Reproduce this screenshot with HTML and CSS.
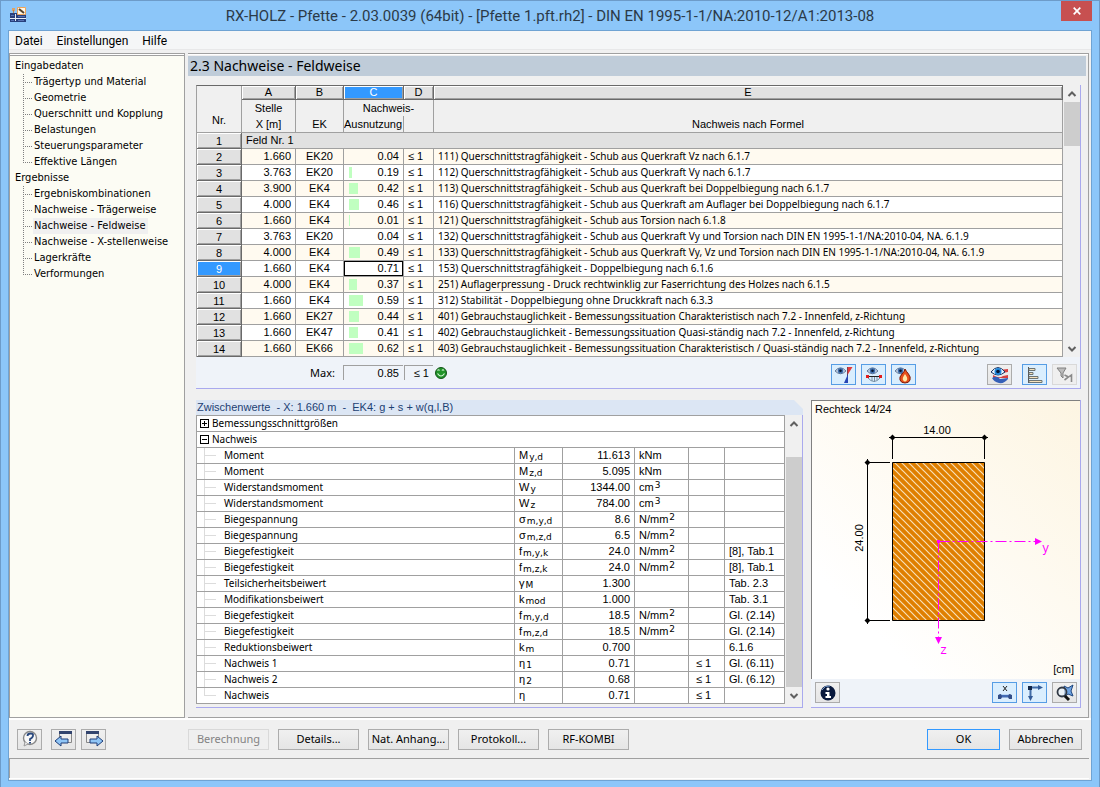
FILE: index.html
```
<!DOCTYPE html>
<html lang="de">
<head>
<meta charset="utf-8">
<title>RX-HOLZ - Pfette</title>
<link rel="stylesheet" href="styles.css">
</head>
<body>
<svg class="defs" width="0" height="0" aria-hidden="true">
  <defs>
    <symbol id="eye" viewBox="0 0 12 8">
      <path d="M0 4Q6-3 12 4Q6 10 0 4Z" fill="#c4d4e8" stroke="#5a7090"/>
      <circle cx="6" cy="3.800" r="3" fill="#3f6fae"/><circle cx="6" cy="3.800" r="1.400" fill="#06142c"/>
    </symbol>
    <symbol id="up" viewBox="0 0 10 8"><path d="M1.500 6L5 2.500L8.500 6" fill="none" stroke="#606060" stroke-width="2"/></symbol>
    <symbol id="down" viewBox="0 0 10 8"><path d="M1.500 2L5 5.500L8.500 2" fill="none" stroke="#606060" stroke-width="2"/></symbol>
  </defs>
</svg>
<div class="window">
  <header class="titlebar">
    <svg class="app-icon" width="16" height="16" viewBox="0 0 16 16" aria-hidden="true">
      <path d="M2 1h3v3H2z" fill="#dca368"/><path d="M3 3h1v3H3z" fill="#b9824e"/>
      <path d="M0 6h16v9H0z" fill="#28407c"/><path d="M0 11h16v1H0zM5 7h1v7H5z" fill="#e8eef8"/>
      <path d="M1 8.500h3M8 9.500h7M1 13.500h3M8 13.500h6" stroke="#5672b4"/><path d="M7.500.500h8v7h-8z" fill="#fff6e4" stroke="#efa65c"/>
      <path d="M9 2l5 4" stroke="#55432c" stroke-width="2"/>
    </svg>
    <h1>RX-HOLZ - Pfette - 2.03.0039 (64bit) - [Pfette 1.pft.rh2] - DIN EN 1995-1-1/NA:2010-12/A1:2013-08</h1>
    <button class="close" aria-label="Schließen"><svg width="8" height="8" viewBox="0 0 8 8"><path d="M.7.7l6.600 6.600M7.300.7L.7 7.300" stroke="#fff" stroke-width="1.700"/></svg></button>
  </header>
  <div class="client">
    <nav class="menu"><button>Datei</button><button>Einstellungen</button><button>Hilfe</button></nav>
    <div class="work">
      <aside class="tree">
        <ul>
          <li><a href="#">Eingabedaten</a>
            <ul class="branch">
              <li><a href="#">Trägertyp und Material</a></li>
              <li><a href="#">Geometrie</a></li>
              <li><a href="#">Querschnitt und Kopplung</a></li>
              <li><a href="#">Belastungen</a></li>
              <li><a href="#">Steuerungsparameter</a></li>
              <li><a href="#">Effektive Längen</a></li>
            </ul>
          </li>
          <li><a href="#">Ergebnisse</a>
            <ul class="branch">
              <li><a href="#">Ergebniskombinationen</a></li>
              <li><a href="#">Nachweise - Trägerweise</a></li>
              <li><a href="#" class="current">Nachweise - Feldweise</a></li>
              <li><a href="#">Nachweise - X-stellenweise</a></li>
              <li><a href="#">Lagerkräfte</a></li>
              <li><a href="#">Verformungen</a></li>
            </ul>
          </li>
        </ul>
      </aside>
      <main class="page">
        <h2>2.3 Nachweise - Feldweise</h2>
        <section class="results">
          <div class="scroller">
            <table class="grid">
              <colgroup><col class="c-nr"><col class="c-a"><col class="c-b"><col class="c-c"><col class="c-d"><col></colgroup>
              <thead>
                <tr class="letters"><th rowspan="3" class="nr">Nr.</th><th>A</th><th>B</th><th class="on">C</th><th>D</th><th>E</th></tr>
                <tr class="h1"><th>Stelle</th><th></th><th colspan="2">Nachweis-</th><th></th></tr>
                <tr class="h2"><th>X [m]</th><th>EK</th><th class="use">Ausnutzung</th><th></th><th>Nachweis nach Formel</th></tr>
              </thead>
              <tbody>
                <tr class="group"><th>1</th><td colspan="5">Feld Nr. 1</td></tr>
                <tr><th>2</th><td>1.660</td><td>EK20</td><td><div class="bar"><span>0.04</span></div></td><td>≤ 1</td><td>111) Querschnittstragfähigkeit - Schub aus Querkraft Vz nach 6.1.7</td></tr>
                <tr><th>3</th><td>3.763</td><td>EK20</td><td><div class="bar"><i style="width:3px"></i><span>0.19</span></div></td><td>≤ 1</td><td>112) Querschnittstragfähigkeit - Schub aus Querkraft Vy nach 6.1.7</td></tr>
                <tr><th>4</th><td>3.900</td><td>EK4</td><td><div class="bar"><i style="width:9px"></i><span>0.42</span></div></td><td>≤ 1</td><td>113) Querschnittstragfähigkeit - Schub aus Querkraft bei Doppelbiegung nach 6.1.7</td></tr>
                <tr><th>5</th><td>4.000</td><td>EK4</td><td><div class="bar"><i style="width:10px"></i><span>0.46</span></div></td><td>≤ 1</td><td>116) Querschnittstragfähigkeit - Schub aus Querkraft am Auflager bei Doppelbiegung nach 6.1.7</td></tr>
                <tr><th>6</th><td>1.660</td><td>EK4</td><td><div class="bar"><i style="width:1px"></i><span>0.01</span></div></td><td>≤ 1</td><td>121) Querschnittstragfähigkeit - Schub aus Torsion nach 6.1.8</td></tr>
                <tr><th>7</th><td>3.763</td><td>EK20</td><td><div class="bar"><span>0.04</span></div></td><td>≤ 1</td><td>132) Querschnittstragfähigkeit - Schub aus Querkraft Vy und Torsion nach DIN EN 1995-1-1/NA:2010-04, NA. 6.1.9</td></tr>
                <tr><th>8</th><td>4.000</td><td>EK4</td><td><div class="bar"><i style="width:11px"></i><span>0.49</span></div></td><td>≤ 1</td><td>133) Querschnittstragfähigkeit - Schub aus Querkraft Vy, Vz und Torsion nach DIN EN 1995-1-1/NA:2010-04, NA. 6.1.9</td></tr>
                <tr><th class="on">9</th><td>1.660</td><td>EK4</td><td class="focus"><div class="bar"><span>0.71</span></div></td><td>≤ 1</td><td>153) Querschnittstragfähigkeit - Doppelbiegung nach 6.1.6</td></tr>
                <tr><th>10</th><td>4.000</td><td>EK4</td><td><div class="bar"><i style="width:8px"></i><span>0.37</span></div></td><td>≤ 1</td><td>251) Auflagerpressung - Druck rechtwinklig zur Faserrichtung des Holzes nach 6.1.5</td></tr>
                <tr><th>11</th><td>1.660</td><td>EK4</td><td><div class="bar"><i style="width:14px"></i><span>0.59</span></div></td><td>≤ 1</td><td>312) Stabilität - Doppelbiegung ohne Druckkraft nach 6.3.3</td></tr>
                <tr><th>12</th><td>1.660</td><td>EK27</td><td><div class="bar"><i style="width:10px"></i><span>0.44</span></div></td><td>≤ 1</td><td>401) Gebrauchstauglichkeit - Bemessungssituation Charakteristisch nach 7.2 - Innenfeld, z-Richtung</td></tr>
                <tr><th>13</th><td>1.660</td><td>EK47</td><td><div class="bar"><i style="width:9px"></i><span>0.41</span></div></td><td>≤ 1</td><td>402) Gebrauchstauglichkeit - Bemessungssituation Quasi-ständig nach 7.2 - Innenfeld, z-Richtung</td></tr>
                <tr><th>14</th><td>1.660</td><td>EK66</td><td><div class="bar"><i style="width:14px"></i><span>0.62</span></div></td><td>≤ 1</td><td>403) Gebrauchstauglichkeit - Bemessungssituation Charakteristisch / Quasi-ständig nach 7.2 - Innenfeld, z-Richtung</td></tr>
              </tbody>
            </table>
            <div class="scrollbar"><svg><use href="#up"/></svg><div class="track"><div class="thumb thumb-top"></div></div><svg><use href="#down"/></svg></div>
          </div>
          <div class="summary">
            <span class="max-label">Max:</span><output class="max">0.85</output><output class="limit">≤ 1</output>
            <svg class="smiley" width="12" height="12" viewBox="0 0 12 12" aria-hidden="true"><circle cx="6" cy="6" r="5.500" fill="#22942a" stroke="#145519"/><path d="M2.500 3.500q1-1.500 2 0M7 3.500q1-1.500 2 0M2.500 6.500Q6 11.500 9.500 6.500" fill="none" stroke="#d8f6d8" stroke-width="1.200"/></svg>
            <div class="tools">
              <button class="tool on" aria-label="Diagramm"><svg width="20" height="18" viewBox="0 0 20 18"><use href="#eye" x="1" y="1" width="11" height="8"/><path d="M13.500 1v16" stroke="#30384c"/><path d="M13.500 1h5l-5 8z" fill="#e23c3c"/><path d="M14 8v9h-4z" fill="#2846b4"/></svg></button>
              <button class="tool on" aria-label="Verformung"><svg width="20" height="18" viewBox="0 0 20 18"><use href="#eye" x="3" y="1" width="11" height="8"/><path d="M4 10.500h12" stroke="#222"/><path d="M4 12q6 7 12 0M8 11v4M10.500 11v5M13 11v3" fill="none" stroke="#7890a4"/><path d="M2 9h3v3H2zM15 9h3v3h-3z" fill="#e31c1c"/></svg></button>
              <button class="tool on" aria-label="Brandschutz"><svg width="20" height="18" viewBox="0 0 20 18"><use href="#eye" x="1" y="1" width="11" height="8"/><path d="M11 3q1 2 3.500 5t1.500 6q-1 3-5 3t-5-3q-1-3 2-6t3-5z" fill="#e8501c" stroke="#7a1c0c"/><path d="M11 8q3 4 2 6-2 3-4 0-1-2 2-6z" fill="#ffe9a8"/></svg></button>
              <button class="tool wide-gap" aria-label="Farben"><svg width="20" height="18" viewBox="0 0 20 18"><path d="M9 4l9-1v3l-6 1-5-1z" fill="#d64040"/><path d="M3 9q6 4 10 1l5-1v3H3z" fill="#d64040"/><path d="M2 12q5-3 8 1l8-1v1q-4 5-9 4T2 12z" fill="#3560b8"/><path d="M1 6Q8-3 15 6Q8 12 1 6Z" fill="#edf6ff" stroke="#173262"/><circle cx="8" cy="5.500" r="3.500" fill="#2088dc"/><circle cx="8" cy="5.500" r="1.800" fill="#061838"/></svg></button>
              <button class="tool on mid-gap" aria-label="Balken"><svg width="20" height="18" viewBox="0 0 20 18"><path d="M3.500 1v16" stroke="#555"/><path d="M4 2.500h6v2H4zM4 6.500h4v2H4zM4 10.500h9v2H4zM4 14.500h13v2H4z" fill="#f6e2bd" stroke="#6c7474"/></svg></button>
              <button class="tool off" aria-label="Filter" disabled><svg width="20" height="18" viewBox="0 0 20 18"><path d="M2 2h9L8 7v5l-2-2V7z" fill="#bcbcbc" stroke="#808080"/><path d="M9.500 9l4 2-4 3M14.500 10.500l2-1.500v7" fill="none" stroke="#8a8a8a" stroke-width="1.600"/></svg></button>
            </div>
          </div>
        </section>
        <div class="lower">
          <section class="details">
            <h3>Zwischenwerte &nbsp;- X: 1.660 m &nbsp;- &nbsp;EK4: g + s + w(q,l,B)</h3>
            <div class="scroller">
              <table class="values">
                <colgroup><col><col class="v-sym"><col class="v-num"><col class="v-unit"><col class="v-lim"><col class="v-ref"></colgroup>
                <tbody>
                  <tr><td colspan="6" class="parent"><div><button class="fold plus" aria-label="Aufklappen"></button>Bemessungsschnittgrößen</div></td></tr>
                  <tr><td colspan="6" class="parent"><div><button class="fold" aria-label="Zuklappen"></button>Nachweis</div></td></tr>
                  <tr><td>Moment</td><td>M<small>y,d</small></td><td>11.613</td><td>kNm</td><td></td><td></td></tr>
                  <tr><td>Moment</td><td>M<small>z,d</small></td><td>5.095</td><td>kNm</td><td></td><td></td></tr>
                  <tr><td>Widerstandsmoment</td><td>W<small>y</small></td><td>1344.00</td><td>cm<sup>3</sup></td><td></td><td></td></tr>
                  <tr><td>Widerstandsmoment</td><td>W<small>z</small></td><td>784.00</td><td>cm<sup>3</sup></td><td></td><td></td></tr>
                  <tr><td>Biegespannung</td><td>σ<small>m,y,d</small></td><td>8.6</td><td>N/mm<sup>2</sup></td><td></td><td></td></tr>
                  <tr><td>Biegespannung</td><td>σ<small>m,z,d</small></td><td>6.5</td><td>N/mm<sup>2</sup></td><td></td><td></td></tr>
                  <tr><td>Biegefestigkeit</td><td>f<small>m,y,k</small></td><td>24.0</td><td>N/mm<sup>2</sup></td><td></td><td>[8], Tab.1</td></tr>
                  <tr><td>Biegefestigkeit</td><td>f<small>m,z,k</small></td><td>24.0</td><td>N/mm<sup>2</sup></td><td></td><td>[8], Tab.1</td></tr>
                  <tr><td>Teilsicherheitsbeiwert</td><td>γ<small>M</small></td><td>1.300</td><td></td><td></td><td>Tab. 2.3</td></tr>
                  <tr><td>Modifikationsbeiwert</td><td>k<small>mod</small></td><td>1.000</td><td></td><td></td><td>Tab. 3.1</td></tr>
                  <tr><td>Biegefestigkeit</td><td>f<small>m,y,d</small></td><td>18.5</td><td>N/mm<sup>2</sup></td><td></td><td>Gl. (2.14)</td></tr>
                  <tr><td>Biegefestigkeit</td><td>f<small>m,z,d</small></td><td>18.5</td><td>N/mm<sup>2</sup></td><td></td><td>Gl. (2.14)</td></tr>
                  <tr><td>Reduktionsbeiwert</td><td>k<small>m</small></td><td>0.700</td><td></td><td></td><td>6.1.6</td></tr>
                  <tr><td>Nachweis 1</td><td>η<small>1</small></td><td>0.71</td><td></td><td>≤ 1</td><td>Gl. (6.11)</td></tr>
                  <tr><td>Nachweis 2</td><td>η<small>2</small></td><td>0.68</td><td></td><td>≤ 1</td><td>Gl. (6.12)</td></tr>
                  <tr><td>Nachweis</td><td>η</td><td>0.71</td><td></td><td>≤ 1</td><td></td></tr>
                </tbody>
              </table>
              <div class="scrollbar"><svg><use href="#up"/></svg><div class="track"><div class="thumb thumb-low"></div></div><svg><use href="#down"/></svg></div>
            </div>
          </section>
          <section class="preview">
            <div class="canvas">
              <svg viewBox="0 0 268 278" role="img" aria-label="Rechteck 14/24">
                <defs><pattern id="hatch" width="7" height="7" patternUnits="userSpaceOnUse"><path d="M-2-2L9 9M-2 5L2 9M5-2L9 2" stroke="#f8e0b8" stroke-width="1.200"/></pattern></defs>
                <text x="3" y="12">Rechteck 14/24</text>
                <text x="125" y="33" text-anchor="middle">14.00</text>
                <text transform="translate(51 137) rotate(-90)" text-anchor="middle">24.00</text>
                <text x="262" y="272" text-anchor="end">[cm]</text>
                <path d="M80.500 61.500h92v158h-92z" fill="#df7f00"/>
                <path d="M80.500 61.500h92v158h-92z" fill="url(#hatch)" stroke="#000"/>
                <path d="M77 36.500h99M80.500 34v24M172.500 34v24M55.500 58v165M53 61.500h25M53 219.500h25" stroke="#000"/>
                <path d="M80.500 33.500l3 3-3 3-3-3zM172.500 33.500l3 3-3 3-3-3zM55.500 58.500l3 3-3 3-3-3zM55.500 216.500l3 3-3 3-3-3z"/>
                <path d="M126.500 140.500h97M126.500 140.500v97" fill="none" stroke="#f0f" stroke-dasharray="11 3 2 3"/>
                <path d="M125 139h3v3h-3zM223 137l7 3.500-7 3.500zM123 236h7l-3.500 7z" fill="#f0f"/>
                <text class="axis" x="230" y="151">y</text><text class="axis" x="128" y="253">z</text>
              </svg>
            </div>
            <div class="preview-tools">
              <button class="tool" aria-label="Info"><svg width="18" height="18" viewBox="0 0 18 18"><circle cx="9" cy="9" r="7.500" fill="#08183c"/><path d="M3 6q3-5 8-4" fill="none" stroke="#7096c8"/><circle cx="9" cy="5" r="1.600" fill="#fff"/><path d="M6.500 8h4v4h1.500v2H6.500v-2H8v-2H6.500z" fill="#fff"/></svg></button>
              <button class="tool on push" aria-label="Bemaßung"><svg width="20" height="18" viewBox="0 0 20 18"><path d="M8 2l4 5M12 2L8 7" stroke="#222"/><path d="M4 12h12" stroke="#426bb4" stroke-width="3"/><path d="M6 10h8v1H6z" fill="#b9d8f6"/><path d="M3 11l3-1 1 3-1 2H3zM17 11l-3-1-1 3 1 2h3z" fill="#334e88"/></svg></button>
              <button class="tool on" aria-label="Achsen"><svg width="20" height="18" viewBox="0 0 20 18"><path d="M5 3.500h10M5.500 4v10" stroke="#426da8" stroke-width="2"/><path d="M13 1l5 2.500-5 2.500zM3 12h5l-2.500 5z" fill="#335b98"/><path d="M3 2h4v4H3z" fill="#142748"/></svg></button>
              <button class="tool" aria-label="Ansicht"><svg width="20" height="18" viewBox="0 0 20 18"><path d="M9 2l4 2 5-3-2 6 2 5-5-2-4 3 1-5z" fill="#6ea4e4" stroke="#1f467e"/><circle cx="7" cy="8" r="4.500" fill="#eaf5ff" fill-opacity=".6" stroke="#303844" stroke-width="1.800"/><path d="M10 12l4 4" stroke="#111" stroke-width="3"/></svg></button>
            </div>
          </section>
        </div>
      </main>
    </div>
    <footer class="actions">
      <button class="tool" aria-label="Hilfe"><svg width="18" height="18" viewBox="0 0 18 18"><circle cx="9" cy="8" r="6.500" fill="#f8f8f8" stroke="#888" stroke-width="1.400"/><path d="M4 12l-1 4 4-2" fill="#eee" stroke="#999"/><path d="M6.500 6q0-2.500 3-2.500t2.500 2q0 2-3 3.500v2" fill="none" stroke="#29487e" stroke-width="1.800"/><path d="M8 12h2v1.500H8z" fill="#29487e"/></svg></button>
      <button class="tool back" aria-label="Zurück"><svg width="20" height="18" viewBox="0 0 20 18"><path d="M5.500 2.500h12v10h-12z" fill="#eee" stroke="#888"/><path d="M5 1h13v3H5z" fill="#32446e"/><path d="M1 11l6-5v3h7v4H7v3z" fill="#8fc5f6" stroke="#1e3d78"/></svg></button>
      <button class="tool" aria-label="Weiter"><svg width="20" height="18" viewBox="0 0 20 18"><path d="M2.500 2.500h12v10h-12z" fill="#eee" stroke="#888"/><path d="M2 1h13v3H2z" fill="#32446e"/><path d="M19 11l-6-5v3H6v4h7v3z" fill="#8fc5f6" stroke="#1e3d78"/></svg></button>
      <div class="group-buttons">
        <button class="btn" disabled>Berechnung</button><button class="btn">Details...</button><button class="btn">Nat. Anhang...</button><button class="btn">Protokoll...</button><button class="btn">RF-KOMBI</button>
      </div>
      <button class="btn end default">OK</button><button class="btn end">Abbrechen</button>
    </footer>
    <div class="status"></div>
  </div>
</div>
</body>
</html>
```
FILE: styles.css
```
* { box-sizing: border-box; }
html, body { height: 100%; }
body { margin: 0; color: #000; font: 11px/16px "Noto Sans", sans-serif; }
button { font: inherit; color: inherit; padding: 0; margin: 0; }
ul { list-style: none; margin: 0; padding: 0; }
a { color: inherit; text-decoration: none; }
.defs { position: absolute; }

.window { min-height: 100%; display: flex; flex-direction: column; padding: 0 7px 7px; background: #8cc6f9; border: 1px solid #6d9bc9; }
.titlebar { display: flex; height: 29px; }
.app-icon { flex: none; margin: 6px 0 0 2px; }
h1 { flex: 1; margin: 0; padding-left: 13px; text-align: center; font: 15px/30px Roboto, sans-serif; color: #2b3a48; white-space: nowrap; }
.close { width: 31px; height: 20px; border: 0; background: #c75050; display: grid; place-items: center; }
.client { flex: 1; display: flex; flex-direction: column; border: 1px solid #6fa3d3; background: #f0f0f0; }
.menu { display: flex; gap: 14px; height: 19px; padding: 0 6px; background: #f5f6f7; border-bottom: 1px solid #e8e8e9; }
.menu button { border: 0; background: none; font: 12px/20px Roboto, sans-serif; }

.work { flex: 1; display: flex; gap: 3px; margin-top: 3px; padding-right: 2px; border-bottom: 2px solid #fff; }
.tree { flex: none; width: 176px; padding-top: 3px; background: #fcfcf4; border: 1px solid #a0a0a0; box-shadow: inset 0 1px #fff, inset 0 2px #a0a0a0; font: 11px/16px "DejaVu Sans Condensed", "DejaVu Sans", sans-serif; }
.tree > ul { padding: 1px 0 0 5px; }
.tree a { display: inline-block; height: 16px; vertical-align: top; white-space: nowrap; }
.branch { padding-left: 8px; }
.branch li { display: flex; height: 16px; }
.branch li::before { content: ""; width: 10px; background: repeating-linear-gradient(#808080 0 1px, transparent 1px 2px) 0 0 / 1px 100% no-repeat, repeating-linear-gradient(90deg, #808080 0 1px, transparent 1px 2px) 0 8px / 10px 1px no-repeat; }
.branch li:last-child::before { background-size: 1px 8px, 10px 1px; }
.branch a { padding: 0 2px 0 1px; }
.current { background: #f0f0f0; }

.page { flex: 1; min-width: 0; display: flex; flex-direction: column; padding: 0 7px 9px 8px; border: solid #a0a0a0; border-width: 1px 1px 1px 0; box-shadow: inset 0 1px #fff; }
h2 { margin: 2px -5px 9px -8px; padding-left: 2px; background: #bfccd9; font: 14px/20px "Noto Sans", sans-serif; }
.scroller { display: flex; }
table { flex: 1; width: 100%; min-width: 0; table-layout: fixed; border-spacing: 0; border-left: 1px solid #a0a0a0; font: 11px/15px "Liberation Sans", Arial, sans-serif; }
th, td { padding: 0; border: solid #a0a0a0; border-width: 0 1px 1px 0; white-space: nowrap; overflow: hidden; font-weight: normal; }
td { height: 16px; }

.results { border-right: 1px solid #a9a9ee; border-bottom: 1px solid #a9a9ee; background: #eff3f9; }
.grid { border-top: 1px solid #696969; background: #fff; }
.grid .c-nr { width: 45px; } .grid .c-a { width: 54px; } .grid .c-b { width: 48px; } .grid .c-c { width: 60px; } .grid .c-d { width: 30px; }
.grid thead th { background: #f0f0f0; }
.grid thead .nr { padding-top: 22px; border-color: #a0a0a0; }
.letters th:not(.nr) { height: 14px; line-height: 13px; background: #e1e1e1; border-color: #696969; box-shadow: inset 1px 1px #fff, inset -1px -1px #a0a0a0; }
.grid .letters .on, .grid tbody .on { background: #3399ff; color: #fff; }
.grid .h1 th { height: 16px; border-bottom: 0; }
.grid .h2 th { height: 17px; }
.grid .use { text-align: left; }
.grid tbody th { height: 16px; line-height: 14px; background: #e1e1e1; border-color: #696969; box-shadow: inset 1px 1px #fff, inset -1px -1px #a0a0a0; }
.grid tbody tr:nth-child(even) td { background: #fffaf0; }
.grid td:nth-child(2) { padding-right: 4px; text-align: right; }
.grid td:nth-child(3) { text-align: center; }
.grid td:nth-child(5) { text-align: center; padding-right: 6px; }
.grid td:nth-child(6) { padding-left: 4px; font: 10px/15px "Noto Sans", sans-serif; }
.grid .group td { padding-left: 4px; text-align: left; background: #e1e1e1; }
.bar { display: flex; align-items: center; height: 15px; padding: 0 4px 0 5px; }
.bar i { height: 11px; background: #c0ffc0; }
.bar span { margin-left: auto; }
.focus { box-shadow: inset 0 0 0 1px #000; }

.scrollbar { flex: none; width: 17px; display: flex; flex-direction: column; align-items: stretch; background: #f0f0f0; }
.scrollbar svg { width: 10px; height: 8px; margin: 5px auto 4px; }
.track { flex: 1; display: flex; flex-direction: column; padding-left: 1px; }
.thumb { background: #cdcdcd; }
.thumb-top { height: 44px; }
.thumb-low { flex: 1; margin-top: 25px; }

.summary { display: flex; align-items: center; height: 31px; padding: 0 3px 0 114px; }
.max-label { width: 33px; }
.max, .limit { height: 15px; padding-right: 4px; border: solid #a0a0a0; border-width: 1px 0 0 1px; font: 11px/15px "Liberation Sans", sans-serif; text-align: right; }
.max { width: 60px; margin-right: 1px; }
.limit { width: 29px; }
.smiley { margin-left: 2px; }
.tools { display: flex; gap: 5px; margin: 4px 0 0 auto; }
.tool { flex: none; width: 25px; height: 21px; display: grid; place-items: center; background: linear-gradient(#f0f0f0, #e5e5e5); border: 1px solid #acacac; }
.tool.on { background: #daeefe; border-color: #569de5; }
.tool.off { background: #efefef; border-color: #d9d9d9; }
.wide-gap { margin-left: 66px; }
.mid-gap { margin-left: 5px; }

.lower { flex: 1; display: flex; gap: 8px; margin-top: 11px; }
.details { flex: 1; min-width: 0; padding-bottom: 3px; border-bottom: 1px solid #a9a9ee; background: linear-gradient(#a9a9ee, #a9a9ee) 100% 9px / 1px 100% no-repeat #f0f0f0; }
.details .scrollbar { margin-right: 1px; }
h3 { margin: 0; padding-left: 1px; background: #dce6f4; clip-path: polygon(0 0, calc(100% - 9px) 0, 100% 9px, 100% 100%, 0 100%); font: 11px/15px "Liberation Sans", Arial, sans-serif; color: #1d4173; }
.values { border-top: 1px solid #a0a0a0; background: #fff; }
.v-sym { width: 48px; } .v-num { width: 72px; } .v-unit { width: 54px; } .v-lim { width: 36px; } .v-ref { width: 60px; }
.values td { padding-left: 4px; }
.values td:first-child { font: 10px/15px "Noto Sans", sans-serif; }
.values td:first-child:not(.parent) { padding-left: 27px; background: linear-gradient(#dcdcdc, #dcdcdc) 7px 0 / 1px 100% no-repeat, linear-gradient(#dcdcdc, #dcdcdc) 7px 7px / 12px 1px no-repeat; }
.values tr:last-child td:first-child:not(.parent) { background-size: 1px 7px, 12px 1px; }
.values td:nth-child(3) { padding-right: 4px; text-align: right; }
.values td:nth-child(5) { padding: 0 6px 0 0; text-align: center; }
.values td.parent { padding-left: 3px; }
.parent div { display: flex; align-items: center; gap: 3px; }
.fold { width: 9px; height: 9px; border: 1px solid #000; background: linear-gradient(#000, #000) center / 5px 1px no-repeat #fff; }
.fold.plus { background: linear-gradient(#000, #000) center / 5px 1px no-repeat, linear-gradient(#000, #000) center / 1px 5px no-repeat #fff; }
small, sup { font-family: "DejaVu Sans", sans-serif; font-size: 9px; line-height: 9px; padding-left: 1px; }
small { vertical-align: -1px; }
sup { vertical-align: 3px; }

.preview { flex: none; width: 270px; display: flex; flex-direction: column; background: #eff3f9; border: solid #a9a9ee; border-width: 0 1px 1px 0; }
.canvas { flex: 1; display: flex; border: solid #808080; border-width: 1px 0 0 1px; background: linear-gradient(45deg, #fff 20%, #fdf5e2); }
.canvas svg { flex: 1; width: 100%; font: 11px "Liberation Sans", Arial, sans-serif; }
.axis { font: 12px "Liberation Mono", monospace; fill: #f0f; }
.preview-tools { display: flex; gap: 5px; padding: 3px 3px 4px 4px; }
.push { margin-left: auto; }

.actions { display: flex; align-items: center; height: 38px; padding: 0 9px 0 8px; }
.back { margin: 0 5px 0 9px; }
.group-buttons { flex: 1; display: flex; gap: 9px; margin-left: 82px; }
.btn { width: 81px; height: 21px; border: 1px solid #acacac; background: linear-gradient(#f0f0f0, #e5e5e5); white-space: nowrap; }
.btn:disabled { color: #838383; background: #efefef; border-color: #d9d9d9; }
.end { width: 73px; margin-left: 9px; }
.default { border-color: #3399ff; }
.status { height: 20px; margin: 0 2px 2px 0; border: solid #a0a0a0; border-width: 1px 0 0 1px; box-shadow: 0 1px #fff; }
```
